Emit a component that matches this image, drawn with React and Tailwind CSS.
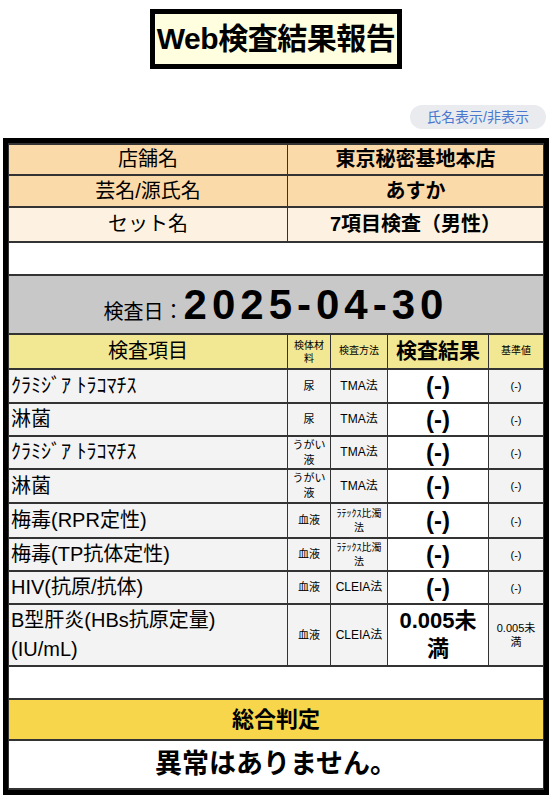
import React from 'react';

// 検査項目の一覧
const items = [
  { name: 'ｸﾗﾐｼﾞｱ ﾄﾗｺﾏﾁｽ', material: '尿', method: 'TMA法', result: '(-)', base: '(-)', h: 'h-[34px]' },
  { name: '淋菌', material: '尿', method: 'TMA法', result: '(-)', base: '(-)', h: 'h-[33px]' },
  { name: 'ｸﾗﾐｼﾞｱ ﾄﾗｺﾏﾁｽ', material: 'うがい液', method: 'TMA法', result: '(-)', base: '(-)', h: 'h-[33px]' },
  { name: '淋菌', material: 'うがい液', method: 'TMA法', result: '(-)', base: '(-)', h: 'h-[34px]' },
  { name: '梅毒(RPR定性)', material: '血液', method: 'ﾗﾃｯｸｽ比濁法', small: true, result: '(-)', base: '(-)', h: 'h-[35px]' },
  { name: '梅毒(TP抗体定性)', material: '血液', method: 'ﾗﾃｯｸｽ比濁法', small: true, result: '(-)', base: '(-)', h: 'h-[33px]' },
  { name: 'HIV(抗原/抗体)', material: '血液', method: 'CLEIA法', result: '(-)', base: '(-)', h: 'h-[33px]' },
  { name: 'B型肝炎(HBs抗原定量)', unit: '(IU/mL)', material: '血液', method: 'CLEIA法', result: '0.005未満', base: '0.005未満', long: true, h: 'h-[62px]' },
];

// 行の区切りは太め、列の区切りは細め
const cell = 'border-x border-y-2 border-[#333] p-0';

export default function App() {
  return (
    <div className="min-h-[800px] bg-white text-black font-['Liberation_Sans','Noto_Sans_CJK_JP',sans-serif]">
      <div className="flex justify-center pt-[9px]">
        <div className="flex h-[60px] w-[252px] items-center justify-center border-[5px] border-black bg-[#ffffe0]">
          <span className="text-[30px] font-bold leading-none tracking-[-0.5px]">Web検査結果報告</span>
        </div>
      </div>

      <div className="mt-[36px] flex justify-end pr-[6px]">
        <button className="h-[24px] rounded-full bg-[#e9ebef] px-[17px] text-[14px] leading-none text-[#4a78cf]">
          氏名表示/非表示
        </button>
      </div>

      <div className="ml-[3px] mt-[9px] w-[546px] border-[5px] border-black">
        <table className="w-full table-fixed border-collapse leading-tight">
          <colgroup>
            <col className="w-[279px]" />
            <col className="w-[43px]" />
            <col className="w-[57px]" />
            <col className="w-[101px]" />
            <col />
          </colgroup>
          <tbody>
            <tr className="h-[31px] bg-[#fbdaa9]">
              <td className={`${cell} text-center text-[20px]`}>店舗名</td>
              <td colSpan={4} className={`${cell} text-center text-[20px] font-bold`}>東京秘密基地本店</td>
            </tr>
            <tr className="h-[32px] bg-[#fbdaa9]">
              <td className={`${cell} text-center text-[20px]`}>芸名/源氏名</td>
              <td colSpan={4} className={`${cell} text-center text-[20px] font-bold`}>あすか</td>
            </tr>
            <tr className="h-[35px] bg-[#fdf2e1]">
              <td className={`${cell} text-center text-[20px]`}>セット名</td>
              <td colSpan={4} className={`${cell} text-center text-[20px] font-bold`}>7項目検査（男性）</td>
            </tr>
            <tr className="h-[33px] bg-white">
              <td colSpan={5} className={cell}></td>
            </tr>
            <tr className="h-[59px] bg-[#c8c8c8]">
              <td colSpan={5} className={`${cell} text-center leading-none`}>
                <span className="text-[20px]">検査日：</span>
                <span className="text-[42px] font-bold tracking-[5px]">2025-04-30</span>
              </td>
            </tr>
            <tr className="h-[35px] bg-[#f2e792]">
              <td className={`${cell} text-center text-[20px]`}>検査項目</td>
              <td className={`${cell} px-[3px] text-center text-[10px] leading-[13px]`}>検体材料</td>
              <td className={`${cell} text-center text-[10px]`}>検査方法</td>
              <td className={`${cell} text-center text-[21px] font-bold`}>検査結果</td>
              <td className={`${cell} text-center text-[10px]`}>基準値</td>
            </tr>
            {items.map((it, i) => (
              <tr key={i} className={it.h}>
                <td className={`${cell} bg-[#f3f3f3] pl-[2px] text-[20px] ${it.long ? 'leading-[29px]' : ''}`}>
                  {it.name}
                  {it.unit && <br />}
                  {it.unit}
                </td>
                <td className={`${cell} bg-[#f3f3f3] px-[3px] text-center text-[11px] leading-[15px]`}>{it.material}</td>
                <td className={`${cell} bg-[#f3f3f3] text-center ${it.small ? 'px-[3px] text-[10px] leading-[14px]' : 'text-[12px]'}`}>{it.method}</td>
                <td className={`${cell} bg-white text-center font-bold ${it.long ? 'px-[4px] text-[22px] leading-[28px]' : 'text-[24px]'}`}>{it.result}</td>
                <td className={`${cell} bg-[#f3f3f3] px-[3px] text-center text-[11px] leading-[14px]`}>{it.base}</td>
              </tr>
            ))}
            <tr className="h-[33px] bg-white">
              <td colSpan={5} className={cell}></td>
            </tr>
            <tr className="h-[41px] bg-[#f7d64b]">
              <td colSpan={5} className={`${cell} text-center text-[22px] font-bold`}>総合判定</td>
            </tr>
            <tr className="h-[49px] bg-white">
              <td colSpan={5} className={`${cell} text-center text-[27px] font-bold`}>異常はありません。</td>
            </tr>
          </tbody>
        </table>
      </div>
    </div>
  );
}
